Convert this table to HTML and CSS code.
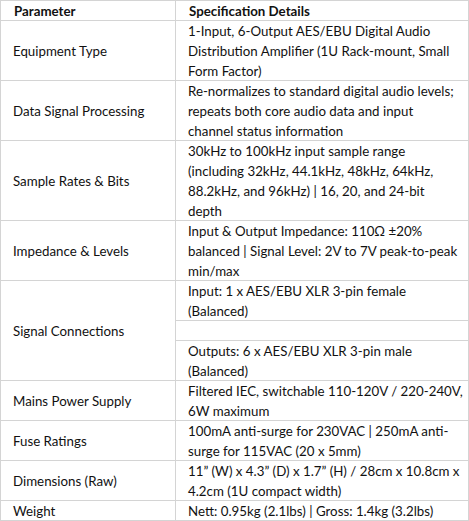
FILE: index.html
```html
<!DOCTYPE html>
<html>
<head>
<meta charset="utf-8">
<link rel="stylesheet" href="styles.css">
</head>
<body>
<table class="spec">
  <colgroup><col class="c1"><col class="c2"></colgroup>
  <thead>
    <tr><th>Parameter</th><th>Specification Details</th></tr>
  </thead>
  <tbody>
    <tr><td class="name">Equipment Type</td><td>1-Input, 6-Output AES/EBU Digital Audio<br>Distribution Amplifier (1U Rack-mount, Small<br>Form Factor)</td></tr>
    <tr><td class="name">Data Signal Processing</td><td>Re-normalizes to standard digital audio levels;<br>repeats both core audio data and input<br>channel status information</td></tr>
    <tr><td class="name">Sample Rates &amp; Bits</td><td>30kHz to 100kHz input sample range<br>(including 32kHz, 44.1kHz, 48kHz, 64kHz,<br>88.2kHz, and 96kHz) | 16, 20, and 24-bit<br>depth</td></tr>
    <tr><td class="name">Impedance &amp; Levels</td><td>Input &amp; Output Impedance: 110Ω ±20%<br>balanced | Signal Level: 2V to 7V peak-to-peak<br>min/max</td></tr>
    <tr><td class="name" rowspan="3">Signal Connections</td><td>Input: 1 x AES/EBU XLR 3-pin female<br>(Balanced)</td></tr>
    <tr><td>&nbsp;</td></tr>
    <tr><td>Outputs: 6 x AES/EBU XLR 3-pin male<br>(Balanced)</td></tr>
    <tr><td class="name">Mains Power Supply</td><td>Filtered IEC, switchable 110-120V / 220-240V,<br>6W maximum</td></tr>
    <tr><td class="name">Fuse Ratings</td><td>100mA anti-surge for 230VAC | 250mA anti-<br>surge for 115VAC (20 x 5mm)</td></tr>
    <tr><td class="name">Dimensions (Raw)</td><td>11” (W) x 4.3” (D) x 1.7” (H) / 28cm x 10.8cm x<br>4.2cm (1U compact width)</td></tr>
    <tr><td class="name">Weight</td><td>Nett: 0.95kg (2.1lbs) | Gross: 1.4kg (3.2lbs)</td></tr>
  </tbody>
</table>
</body>
</html>
```
FILE: styles.css
```css
html, body {
  margin: 0;
  padding: 0;
  background: #ffffff;
}

.spec {
  border-collapse: separate;
  border-spacing: 0;
  table-layout: fixed;
  width: 469px;
  border-top: 1px solid #d4d4d4;
  border-left: 1px solid #d4d4d4;
  font-family: Lato, "Liberation Sans", sans-serif;
  font-size: 13.3px;
  line-height: 20px;
  color: #111111;
}

.spec .c1 { width: 175px; }
.spec .c2 { width: 293px; }

.spec th,
.spec td {
  padding: 0 1px 0 12px;
  text-align: left;
  vertical-align: top;
  white-space: nowrap;
  box-shadow: inset -1px -1px 0 #d4d4d4;
}

.spec th {
  font-weight: 700;
  vertical-align: middle;
  padding-left: 13px;
}

.spec td.name {
  vertical-align: middle;
}
```
